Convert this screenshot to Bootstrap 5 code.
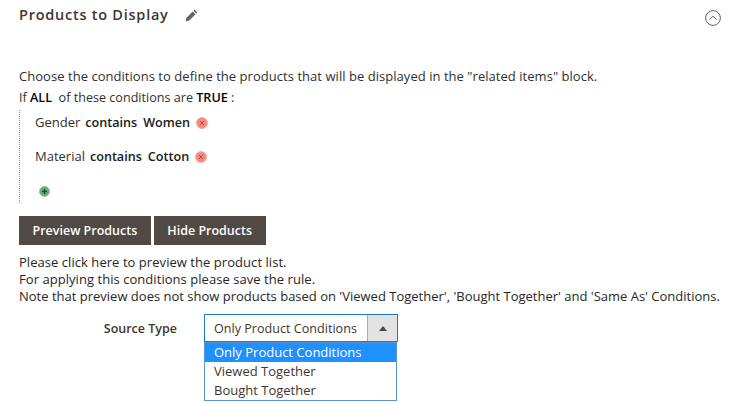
<!DOCTYPE html>
<html lang="en">
<head>
    <meta charset="UTF-8">
    <title>Products to Display</title>
    <link href="https://cdn.jsdelivr.net/npm/bootstrap@5.3.0/dist/css/bootstrap.min.css" rel="stylesheet">
    <style>
        body { font-family: "Open Sans", sans-serif; font-size: 13px; color: #303030; background: #fff; overflow: hidden; }
        .page-wrap { padding: 0 11px 0 19px; width: 732px; height: 404px; }
        .head-row { height: 30px; }
        .head-title { font-size: 14.5px; font-weight: 600; letter-spacing: .75px; color: #41362f; margin: 0; line-height: 30px; }
        .toggle-btn { margin-top: 10px; }
        .intro { margin-top: 36px; line-height: 21px; }
        .intro-wide { letter-spacing: .04px; }
        .intro-tight { font-size: 12.6px; }
        .tree { border-left: 1px dotted #888; margin-top: 2px; padding-left: 15px; height: 93px; }
        .tree-line { height: 34px; padding-top: 2px; padding-bottom: 10px; }
        .tree-line b { font-size: 12.6px; font-weight: 600; color: #1a1a1a; }
        .tree-word { margin-right: 6px; }
        .tree-name { margin-right: 5px; }
        .act-btn { background: #514943; color: #fff; border: 0; border-radius: 0; font-size: 12.5px; font-weight: 600; height: 29px; padding: 1px 13.5px 0; }
        .btn-gap { margin-top: 13px; gap: 3px; }
        .note { margin-top: 9px; line-height: 17px; color: #262626; }
        .note-wide { letter-spacing: .05px; }
        .src-row { margin-top: 9px; }
        .src-label { width: 185px; text-align: right; padding-right: 27px; font-size: 12.5px; font-weight: 600; color: #41362f; line-height: 29px; }
        .src-box { width: 194px; position: relative; }
        .src-select { height: 28px; border: 1px solid #1979c3; }
        .src-val { line-height: 28px; padding-left: 9px; color: #41362f; font-size: 12.6px; }
        .src-arrow { width: 30px; background: #e3e3e3; border-left: 1px solid #adadad; }
        .src-list { position: absolute; top: 28px; left: 0; width: 193px; border: 1px solid #5b95cf; background: #fff; }
        .src-item { height: 19px; line-height: 19px; padding-left: 9px; color: #41362f; }
        .src-item.on { background: #1e90ff; color: #fff; }
    </style>
</head>
<body>
    <div class="page-wrap">
        <div class="head-row d-flex justify-content-between">
            <div class="d-flex align-items-center">
                <h2 class="head-title">Products to Display</h2>
                <svg class="ms-3" width="13" height="13" viewBox="0 0 13 13"><path d="M9.600.6l2.800 2.800-1.200 1.200-2.800-2.800zM7.700 2.500l2.800 2.800L4 11.800.7 12.300l.5-3.300z" fill="#6b6560"/></svg>
            </div>
            <svg class="toggle-btn" width="16" height="16" viewBox="0 0 16 16" fill="none" stroke="#41362f" stroke-width=".8"><circle cx="8" cy="8" r="7.400"/><path d="M4.500 9.500L8 6.300l3.500 3.200"/></svg>
        </div>
        <div class="intro">
            <div class="intro-wide">Choose the conditions to define the products that will be displayed in the "related items" block.</div>
            <div class="intro-tight">If <b class="fw-semibold text-black">ALL</b>&nbsp; of these conditions are <b class="fw-semibold text-black">TRUE</b> :</div>
        </div>
        <div class="tree">
            <div class="tree-line d-flex align-items-center">
                <span class="tree-name">Gender</span><b class="tree-word">contains</b><b class="tree-word">Women</b>
                <svg width="12" height="12" viewBox="0 0 12 12"><circle cx="6" cy="6" r="5.500" fill="#f58a80" stroke="#f0b0aa"/><path d="M4 4l4 4M8 4l-4 4" stroke="#b8473f" stroke-width=".9"/></svg>
            </div>
            <div class="tree-line d-flex align-items-center">
                <span class="tree-name">Material</span><b class="tree-word">contains</b><b class="tree-word">Cotton</b>
                <svg width="12" height="12" viewBox="0 0 12 12"><circle cx="6" cy="6" r="5.500" fill="#f58a80" stroke="#f0b0aa"/><path d="M4 4l4 4M8 4l-4 4" stroke="#b8473f" stroke-width=".9"/></svg>
            </div>
            <div class="tree-line d-flex align-items-center">
                <svg class="ms-1" width="11" height="11" viewBox="0 0 11 11"><circle cx="5.500" cy="5.500" r="5" fill="#6fa57f" stroke="#9cc0a6"/><path d="M5.500 3v5M3 5.500h5" stroke="#14551f" stroke-width="1.300"/></svg>
            </div>
        </div>
        <div class="d-flex btn-gap">
            <button type="button" class="btn act-btn">Preview Products</button>
            <button type="button" class="btn act-btn">Hide Products</button>
        </div>
        <div class="note">
            <div class="note-wide">Please click here to preview the product list.</div>
            <div class="note-wide">For applying this conditions please save the rule.</div>
            <div>Note that preview does not show products based on 'Viewed Together', 'Bought Together' and 'Same As' Conditions.</div>
        </div>
        <div class="src-row d-flex">
            <div class="src-label">Source Type</div>
            <div class="src-box">
                <div class="src-select d-flex justify-content-between">
                    <div class="src-val">Only Product Conditions</div>
                    <div class="src-arrow d-flex align-items-center justify-content-center">
                        <svg width="8" height="5" viewBox="0 0 8 5"><path d="M4 0l4 5H0z" fill="#514943"/></svg>
                    </div>
                </div>
                <div class="src-list">
                    <div class="src-item on">Only Product Conditions</div>
                    <div class="src-item">Viewed Together</div>
                    <div class="src-item">Bought Together</div>
                </div>
            </div>
        </div>
    </div>
    <script src="https://cdn.jsdelivr.net/npm/bootstrap@5.3.0/dist/js/bootstrap.bundle.min.js"></script>
</body>
</html>
